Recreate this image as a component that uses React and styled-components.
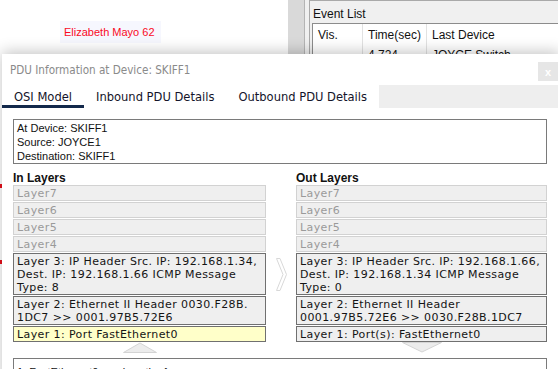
import React from 'react'
import styled, { createGlobalStyle } from 'styled-components'

const GlobalStyle = createGlobalStyle`
  html, body {
    margin: 0;
    padding: 0;
    background: #fff;
  }
  body {
    font-family: 'Liberation Sans', Arial, sans-serif;
  }
`

const inLayers = [
  { name: 'Layer7' },
  { name: 'Layer6' },
  { name: 'Layer5' },
  { name: 'Layer4' },
  {
    lines: [
      'Layer 3: IP Header Src. IP: 192.168.1.34,',
      'Dest. IP: 192.168.1.66 ICMP Message',
      'Type: 8',
    ],
  },
  {
    lines: ['Layer 2: Ethernet II Header 0030.F28B.', '1DC7 >> 0001.97B5.72E6'],
  },
  { lines: ['Layer 1: Port FastEthernet0'], highlight: true },
]

const outLayers = [
  { name: 'Layer7' },
  { name: 'Layer6' },
  { name: 'Layer5' },
  { name: 'Layer4' },
  {
    lines: [
      'Layer 3: IP Header Src. IP: 192.168.1.66,',
      'Dest. IP: 192.168.1.34 ICMP Message',
      'Type: 0',
    ],
  },
  {
    lines: ['Layer 2: Ethernet II Header', '0001.97B5.72E6 >> 0030.F28B.1DC7'],
  },
  { lines: ['Layer 1: Port(s): FastEthernet0'] },
]

const LayerStack = ({ layers }) => (
  <Stack>
    {layers.map((layer, i) =>
      layer.lines ? (
        <Layer key={i} $active $highlight={layer.highlight}>
          {layer.lines.map((line, j) => (
            <div key={j}>{line}</div>
          ))}
        </Layer>
      ) : (
        <Layer key={i}>{layer.name}</Layer>
      )
    )}
  </Stack>
)

export default function App() {
  return (
    <Screen>
      <GlobalStyle />
      <Canvas>
        <DeviceLabel>Elizabeth Mayo 62</DeviceLabel>
        <LinkEnd style={{ top: 184 }} />
        <LinkEnd style={{ top: 260 }} />
      </Canvas>

      <SidePanel>
        <Strip />
        <Spacer />
        <EventPanel>
          <PanelTitle>Event List</PanelTitle>
          <EventTable>
            <EventRow $head>
              <Cell $w={50}>Vis.</Cell>
              <Cell $w={64}>Time(sec)</Cell>
              <Cell>Last Device</Cell>
            </EventRow>
            <EventRow>
              <Cell $w={50} />
              <Cell $w={64}>4.724</Cell>
              <Cell>JOYCE Switch</Cell>
            </EventRow>
          </EventTable>
        </EventPanel>
      </SidePanel>

      <Dialog>
        <TitleBar>
          <Title>PDU Information at Device: SKIFF1</Title>
          <CloseButton>x</CloseButton>
        </TitleBar>
        <TabBar>
          <Tab $active>OSI Model</Tab>
          <Tab>Inbound PDU Details</Tab>
          <Tab>Outbound PDU Details</Tab>
          <TabFiller />
        </TabBar>
        <Body>
          <InfoBox>
            <div>At Device: SKIFF1</div>
            <div>Source: JOYCE1</div>
            <div>Destination: SKIFF1</div>
          </InfoBox>
          <Columns>
            <Column>
              <ColumnHeading>In Layers</ColumnHeading>
              <LayerStack layers={inLayers} />
              <ChevronRow>
                <svg width="34" height="11" viewBox="0 0 34 11">
                  <polygon
                    points="0.5,10.5 17,1 33.5,10.5"
                    fill="#ececec"
                    stroke="#d4d4d4"
                  />
                </svg>
              </ChevronRow>
            </Column>
            <Gutter>
              <svg width="11" height="33" viewBox="0 0 11 33">
                <polygon
                  points="0.5,0.5 4,0.5 10.5,16.5 4,32.5 0.5,32.5 7,16.5"
                  fill="#fff"
                  stroke="#d8d8d8"
                />
              </svg>
            </Gutter>
            <Column>
              <ColumnHeading>Out Layers</ColumnHeading>
              <LayerStack layers={outLayers} />
              <ChevronRow>
                <svg width="40" height="11" viewBox="0 0 40 11">
                  <polygon
                    points="0.5,0.5 20,10 39.5,0.5"
                    fill="#ececec"
                    stroke="#d4d4d4"
                  />
                </svg>
              </ChevronRow>
            </Column>
          </Columns>
          <StepBox>1. FastEthernet0 receives the frame.</StepBox>
        </Body>
      </Dialog>
    </Screen>
  )
}

// Style
const Screen = styled.div`
  position: relative;
  width: 558px;
  height: 369px;
  overflow: hidden;
  display: flex;
  background: #fff;
`

const Canvas = styled.div`
  position: relative;
  flex: 1;
`

const DeviceLabel = styled.div`
  position: absolute;
  left: 60px;
  top: 21px;
  padding: 4px 6px 4px 4px;
  background: #f6f7fe;
  color: #fa0a1e;
  font-size: 11px;
  line-height: 14px;
`

const LinkEnd = styled.div`
  position: absolute;
  left: 0;
  width: 2px;
  height: 4px;
  background: #e8101c;
`

const SidePanel = styled.div`
  width: 270px;
  display: flex;
  background: #f0f0f0;
`

const Strip = styled.div`
  width: 16px;
  background: #d9d9d9;
  border-right: 1px solid #b4b4b4;
`

const Spacer = styled.div`
  width: 4px;
`

const EventPanel = styled.div`
  flex: 1;
  border-left: 1px solid #a9a9a9;
  border-top: 1px solid #a9a9a9;
  padding: 5px 0 0 2px;
`

const PanelTitle = styled.div`
  padding-left: 1px;
  font-size: 12px;
  line-height: 16px;
  color: #111;
`

const EventTable = styled.div`
  margin-top: 1px;
  background: #fff;
  border-left: 1px solid #8c8c8c;
  border-top: 1px solid #8c8c8c;
`

const EventRow = styled.div`
  display: flex;
  height: ${p => (p.$head ? '21px' : '20px')};
  align-items: center;
  font-size: 12px;
  color: #111;
`

const Cell = styled.div`
  width: ${p => (p.$w ? `${p.$w}px` : 'auto')};
  flex: ${p => (p.$w ? 'none' : 1)};
  height: 100%;
  display: flex;
  align-items: center;
  padding-left: 5px;
  box-sizing: border-box;
  border-right: ${p => (p.$w ? '1px solid #e2e2e2' : 'none')};
`

const Dialog = styled.div`
  position: absolute;
  left: 2px;
  top: 54px;
  width: 558px;
  height: 330px;
  background: #fff;
  box-shadow: 0 -2px 14px rgba(0, 0, 0, 0.24);
`

const TitleBar = styled.div`
  height: 31px;
  display: flex;
  align-items: center;
  justify-content: space-between;
  padding-left: 8px;
`

const Title = styled.div`
  font-family: 'DejaVu Sans Condensed', 'DejaVu Sans', sans-serif;
  font-size: 11.6px;
  color: #8a8a8a;
`

const CloseButton = styled.div`
  align-self: flex-start;
  margin-top: 8px;
  margin-right: 2px;
  width: 20px;
  height: 19px;
  display: flex;
  align-items: center;
  justify-content: center;
  background: #e6e6e6;
  color: #fff;
  font-weight: bold;
  font-size: 11px;
`

const TabBar = styled.div`
  display: flex;
  height: 23px;
`

const Tab = styled.div`
  padding: 0 12px;
  line-height: 23px;
  font-family: 'DejaVu Sans Condensed', 'DejaVu Sans', sans-serif;
  font-size: 12.8px;
  color: #14142a;
  box-shadow: ${p => (p.$active ? 'inset 0 -3px 0 #13294b' : 'none')};
`

const TabFiller = styled.div`
  flex: 1;
  background: #eeeeee;
`

const Body = styled.div`
  width: 534px;
  padding: 11px 0 0 11px;
`

const InfoBox = styled.div`
  border: 1px solid #7a7a7a;
  padding: 1px 3px 0;
  font-size: 11px;
  line-height: 14px;
  color: #111;
`

const Columns = styled.div`
  display: grid;
  grid-template-columns: 253px 30px 251px;
`

const Column = styled.div`
  display: flex;
  flex-direction: column;
`

const ColumnHeading = styled.div`
  margin-top: 7px;
  font-size: 12px;
  line-height: 14px;
  font-weight: bold;
  color: #111;
`

const Stack = styled.div`
  display: flex;
  flex-direction: column;
  gap: 1px;
`

const Layer = styled.div`
  border: 1px solid ${p => (p.$active ? '#707070' : '#d2d2d2')};
  background: ${p => (p.$highlight ? '#ffffc9' : '#efefef')};
  color: ${p => (p.$active ? '#141414' : '#9a9a9a')};
  padding: 1px 3px 0;
  font-family: 'DejaVu Sans', sans-serif;
  font-size: 11px;
  letter-spacing: 0.4px;
  line-height: 13px;
  white-space: nowrap;
  overflow: hidden;
`

const ChevronRow = styled.div`
  display: flex;
  justify-content: center;
  height: 11px;
`

const Gutter = styled.div`
  display: flex;
  justify-content: center;
  padding-top: 94px;
`

const StepBox = styled.div`
  margin-top: 5px;
  border: 1px solid #7a7a7a;
  padding: 6px 3px 3px;
  font-size: 11px;
  line-height: 14px;
  color: #111;
`
